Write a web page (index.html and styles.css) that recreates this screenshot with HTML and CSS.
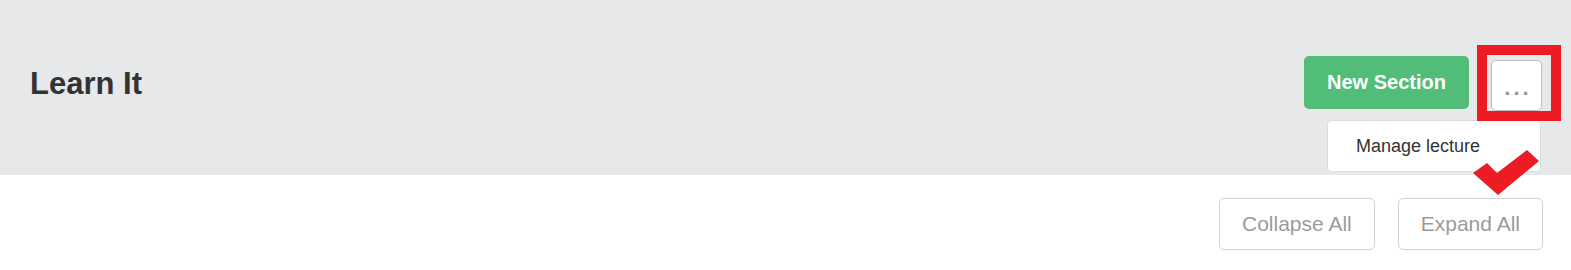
FILE: index.html
```html
<!DOCTYPE html>
<html>
<head>
<meta charset="utf-8">
<link rel="stylesheet" href="styles.css">
</head>
<body>
<div class="page">
  <header class="header">
    <h1 class="title">Learn It</h1>
    <div class="actions">
      <button class="btn-green">New Section</button>
      <div class="more-wrap">
        <button class="btn-more">...</button>
        <div class="menu">
          <div class="menu-item">Manage lecture</div>
        </div>
      </div>
    </div>
  </header>
  <div class="toolbar">
    <button class="btn-light">Collapse All</button>
    <button class="btn-light">Expand All</button>
  </div>
  <div class="anno-box"></div>
  <svg class="anno-check" width="80" height="60" viewBox="0 0 80 60">
    <polygon points="0,23 14,13 24,23 54,0 66,11 25,45" fill="#ed1c24"/>
  </svg>
</div>
</body>
</html>
```
FILE: styles.css
```css
* { box-sizing: border-box; }
body {
  margin: 0;
  font-family: "Liberation Sans", Arial, sans-serif;
  background: #fff;
}
.page {
  position: relative;
  width: 1571px;
  height: 270px;
  overflow: hidden;
}
.header {
  height: 175px;
  background: #e7e8ea;
  display: flex;
  align-items: center;
  justify-content: space-between;
  padding: 0 29px 8px 30px;
}
.title {
  margin: 0;
  font-size: 31px;
  font-weight: bold;
  color: #333;
}
.actions {
  display: flex;
  align-items: flex-start;
  gap: 22px;
}
.btn-green {
  height: 53px;
  width: 165px;
  background: #51bd78;
  border: none;
  border-radius: 5px;
  color: #fff;
  font-family: "Liberation Sans", Arial, sans-serif;
  font-size: 20px;
  font-weight: bold;
  padding: 0;
}
.more-wrap {
  position: relative;
  margin-top: 4px;
}
.btn-more {
  width: 51px;
  height: 51px;
  background: #fff;
  border: 1px solid #bdbdbd;
  border-radius: 5px;
  color: #8f969c;
  font-family: "Liberation Sans", Arial, sans-serif;
  font-size: 22px;
  font-weight: bold;
  letter-spacing: 3px;
  padding: 4px 0 0 3px;
}
.menu {
  position: absolute;
  top: 60px;
  right: 1px;
  width: 214px;
  height: 52px;
  background: #fff;
  border: 1px solid #dcdcdc;
  border-radius: 4px;
  display: flex;
  align-items: center;
}
.menu-item {
  padding-left: 28px;
  font-size: 18px;
  color: #333;
}
.toolbar {
  display: flex;
  justify-content: flex-end;
  gap: 23px;
  padding: 23px 28px 0 0;
}
.btn-light {
  height: 52px;
  padding: 0 22px;
  background: #fff;
  border: 1px solid #d2d2d2;
  border-radius: 5px;
  color: #9b9b9b;
  font-family: "Liberation Sans", Arial, sans-serif;
  font-size: 21px;
}
.anno-box {
  position: absolute;
  left: 1477px;
  top: 45px;
  width: 84px;
  height: 76px;
  border: 10px solid #ed1c24;
}
.anno-check {
  position: absolute;
  left: 1473px;
  top: 150px;
}
```
